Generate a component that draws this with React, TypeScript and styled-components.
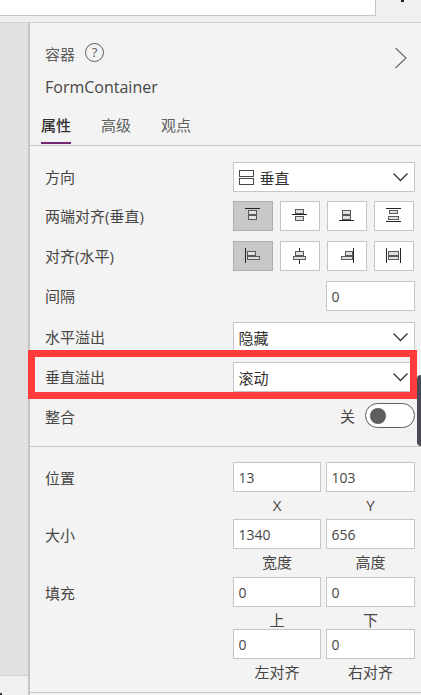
import React from 'react';
import styled, { createGlobalStyle } from 'styled-components';

const border = '#c8c6c4';
const text = '#484644';

const GlobalStyle = createGlobalStyle`
  html, body {
    margin: 0;
    height: 695px;
    overflow: hidden;
    background: #f0f0f0;
    font-family: 'Open Sans', 'Noto Sans CJK SC', sans-serif;
    color: ${text};
  }
  * {
    box-sizing: border-box;
  }
`;

const Page = styled.div`
  width: 421px;
  height: 695px;
  display: flex;
  flex-direction: column;
  overflow: hidden;
`;

const TopBar = styled.div`
  height: 23px;
  flex: none;
  display: flex;
  align-items: flex-start;
  background: #f0f0f0;
  border-bottom: 1px solid #d2d2d2;
`;

const FormulaBox = styled.div`
  width: 376px;
  height: 16px;
  background: #fff;
  border-right: 1px solid ${border};
  border-bottom: 1px solid ${border};
`;

const ExpandTip = styled.div`
  width: 3px;
  height: 2px;
  margin-left: 25px;
  background: #222;
`;

const Main = styled.div`
  flex: 1;
  display: flex;
  min-height: 0;
`;

const Rail = styled.div`
  width: 30px;
  flex: none;
  display: flex;
  flex-direction: column;
  background: #f0f0f0;
  border-right: 2px solid ${border};
`;

const RailFill = styled.div`
  height: 653px;
  background: #e1e1e1;
  border-bottom: 1px solid #d2d2d2;
`;

const RailGrow = styled.div`
  flex: 1;
  display: flex;
  align-items: flex-end;
`;

const RailTip = styled.div`
  width: 2px;
  height: 2px;
  background: #333;
`;

const Panel = styled.div`
  position: relative;
  flex: 1;
  display: flex;
  flex-direction: column;
  background: #f3f3f3;
`;

const Header = styled.div`
  display: flex;
  justify-content: space-between;
  padding: 17px 14px 0 15px;
`;

const TitleBlock = styled.div`
  display: flex;
  flex-direction: column;
`;

const TitleRow = styled.div`
  display: flex;
  align-items: center;
  height: 26px;
  gap: 10px;
  font-size: 15px;
  color: #605e5c;
`;

const HelpMark = styled.span`
  width: 19px;
  height: 19px;
  margin-top: -2px;
  border: 1px solid #605e5c;
  border-radius: 50%;
  display: flex;
  align-items: center;
  justify-content: center;
  font-size: 13px;
  line-height: 1;
`;

const ComponentName = styled.div`
  margin-top: 9px;
  font-size: 16px;
  line-height: 24px;
  color: ${text};
`;

const CollapseIcon = styled.svg`
  width: 12px;
  height: 22px;
  margin-top: 7px;
  fill: none;
  stroke: #6f6d6b;
  stroke-width: 1.2;
`;

const TabBar = styled.div`
  display: flex;
  gap: 30px;
  height: 36px;
  margin-top: 11px;
  padding-left: 11px;
  border-bottom: 1px solid ${border};
`;

const Tab = styled.div<{ $active?: boolean }>`
  height: 34px;
  padding-bottom: 2px;
  font-size: 15px;
  line-height: 30px;
  font-weight: ${(p) => (p.$active ? 500 : 400)};
  color: ${(p) => (p.$active ? '#323130' : '#605e5c')};
  border-bottom: 2px solid ${(p) => (p.$active ? '#742774' : 'transparent')};
`;

const Section = styled.div<{ $top: number; $bottom: number }>`
  padding: ${(p) => p.$top}px 0 ${(p) => p.$bottom}px;
  border-bottom: 1px solid ${border};
`;

const Row = styled.div<{ $gap?: number; $height?: number }>`
  position: relative;
  display: grid;
  grid-template-columns: 188px 182px;
  grid-template-rows: 100%;
  align-items: center;
  height: ${(p) => p.$height ?? 30}px;
  margin-top: ${(p) => p.$gap ?? 0}px;
  padding-left: 15px;
`;

const Label = styled.div`
  font-size: 15px;
  line-height: 30px;
  white-space: nowrap;
`;

const ToggleLabel = styled(Label)`
  padding-top: 3px;
`;

const Select = styled.div`
  height: 30px;
  display: flex;
  align-items: center;
  gap: 6px;
  padding: 0 6px 0 4.5px;
  background: #fff;
  border: 1px solid ${border};
  font-size: 15px;
  color: #323130;
`;

const SelectValue = styled.span`
  flex: 1;
`;

const Chevron = styled.svg`
  width: 15px;
  height: 9px;
  fill: none;
  stroke: #323130;
  stroke-width: 1.3;
`;

const DirectionIcon = styled.svg`
  width: 15px;
  height: 15px;
  fill: none;
  stroke: #484644;
  stroke-width: 1;
`;

const ButtonGroup = styled.div`
  display: grid;
  grid-template-columns: repeat(4, 39.5px);
  column-gap: 7.67px;
`;

const AlignButton = styled.div<{ $selected?: boolean }>`
  height: 30px;
  display: flex;
  align-items: center;
  justify-content: center;
  background: ${(p) => (p.$selected ? '#c8c8c8' : '#fff')};
  border: 1px solid ${(p) => (p.$selected ? '#b0aeac' : border)};
`;

const AlignSvg = styled.svg`
  width: 16px;
  height: 16px;
  rect {
    fill: #e0e0e0;
    stroke: #5a5a5a;
    stroke-width: 1;
  }
  line {
    stroke: #252423;
    stroke-width: 1;
  }
`;

const NumberInput = styled.div<{ $width?: number }>`
  height: 30px;
  width: ${(p) => (p.$width ? `${p.$width}px` : 'auto')};
  display: flex;
  align-items: center;
  padding-left: 4.5px;
  background: #fff;
  border: 1px solid ${border};
  font-size: 14px;
  color: #484644;
`;

const RightCell = styled.div`
  display: flex;
  justify-content: flex-end;
`;

const ToggleCell = styled.div`
  display: flex;
  align-items: center;
  justify-content: flex-end;
  gap: 10px;
  font-size: 15px;
`;

const ToggleTrack = styled.div`
  width: 50px;
  height: 25px;
  display: flex;
  align-items: center;
  padding-left: 4px;
  background: #fff;
  border: 1px solid #605e5c;
  border-radius: 13px;
`;

const ToggleKnob = styled.div`
  width: 16px;
  height: 16px;
  border-radius: 50%;
  background: #605e5c;
`;

const Highlight = styled.div`
  position: absolute;
  left: -2px;
  top: -12px;
  width: 389px;
  height: 49px;
  border: 7px solid #ff3b3b;
  pointer-events: none;
`;

const ScrollHandle = styled.div`
  position: absolute;
  right: 0;
  top: 352px;
  width: 4px;
  height: 71px;
  background: #4b4b57;
  border-radius: 4px 0 0 4px;
`;

const PairSection = styled.div`
  padding-top: 15px;
`;

const PairGrid = styled.div`
  display: grid;
  grid-template-columns: 188px 88px 89px;
  padding-left: 15px;
`;

const PairLabel = styled.div`
  font-size: 15px;
  line-height: 30px;
  padding-top: 1px;
  height: 30px;
`;

const PairInputs = styled.div`
  grid-column: 2 / 4;
  display: grid;
  grid-template-columns: 88px 89px;
  column-gap: 5px;
  margin-right: -5px;
`;

const Captions = styled.div<{ $height: number }>`
  grid-column: 2 / 4;
  display: grid;
  grid-template-columns: 88px 89px;
  column-gap: 5px;
  margin-right: -5px;
  height: ${(p) => p.$height}px;
`;

const Caption = styled.div<{ $height: number }>`
  height: ${(p) => p.$height}px;
  line-height: 27px;
  text-align: center;
  font-size: 15px;
  white-space: nowrap;
`;

const BlankLabel = styled.div`
  grid-column: 1;
`;

const Footer = styled.div`
  margin-top: 5px;
  border-top: 1px solid ${border};
  flex: 1;
`;

type AlignKind = 'top' | 'middle' | 'bottom' | 'spreadV' | 'left' | 'center' | 'right' | 'spreadH';

const AlignIcon = ({ kind }: { kind: AlignKind }) => {
  const drawings: Record<AlignKind, React.ReactNode> = {
    top: (
      <>
        <line x1="0" y1="0.5" x2="15" y2="0.5" />
        <rect x="3.5" y="2.5" width="8" height="4" />
        <rect x="3.5" y="7.5" width="8" height="4" />
      </>
    ),
    middle: (
      <>
        <rect x="3.5" y="1.5" width="8" height="4" />
        <line x1="0" y1="6.5" x2="15" y2="6.5" />
        <rect x="3.5" y="8.5" width="8" height="4" />
      </>
    ),
    bottom: (
      <>
        <rect x="3.5" y="2.5" width="8" height="4" />
        <rect x="3.5" y="7.5" width="8" height="4" />
        <line x1="0" y1="12.5" x2="15" y2="12.5" />
      </>
    ),
    spreadV: (
      <>
        <line x1="0" y1="0.5" x2="15" y2="0.5" />
        <rect x="3.5" y="2.5" width="8" height="3" />
        <rect x="2.5" y="8.5" width="10" height="3" />
        <line x1="0" y1="13.5" x2="15" y2="13.5" />
      </>
    ),
    left: (
      <>
        <line x1="0.5" y1="0" x2="0.5" y2="15" />
        <rect x="2.5" y="3.5" width="8" height="4" />
        <rect x="2.5" y="8.5" width="12" height="3" />
      </>
    ),
    center: (
      <>
        <line x1="7.5" y1="0" x2="7.5" y2="16" />
        <rect x="3.5" y="3.5" width="8" height="4" />
        <rect x="1.5" y="8.5" width="12" height="3" />
      </>
    ),
    right: (
      <>
        <rect x="6.5" y="3.5" width="7" height="4" />
        <rect x="2.5" y="8.5" width="11" height="3" />
        <line x1="14.5" y1="0" x2="14.5" y2="15" />
      </>
    ),
    spreadH: (
      <>
        <line x1="0.5" y1="0" x2="0.5" y2="15" />
        <rect x="2.5" y="3.5" width="10" height="4" />
        <rect x="2.5" y="8.5" width="10" height="3" />
        <line x1="14.5" y1="0" x2="14.5" y2="15" />
      </>
    ),
  };
  return <AlignSvg viewBox="0 0 16 16">{drawings[kind]}</AlignSvg>;
};

const SelectChevron = () => (
  <Chevron viewBox="0 0 15 9">
    <polyline points="0.5,0.5 7.5,7.5 14.5,0.5" />
  </Chevron>
);

const verticalButtons: AlignKind[] = ['top', 'middle', 'bottom', 'spreadV'];
const horizontalButtons: AlignKind[] = ['left', 'center', 'right', 'spreadH'];

const ButtonRow = ({ items }: { items: AlignKind[] }) => (
  <ButtonGroup>
    {items.map((kind, index) => (
      <AlignButton key={kind} $selected={index === 0}>
        <AlignIcon kind={kind} />
      </AlignButton>
    ))}
  </ButtonGroup>
);

const PairFields = ({
  label,
  values,
  captions,
  captionHeight,
}: {
  label?: string;
  values: string[];
  captions: string[];
  captionHeight: number;
}) => (
  <>
    {label ? <PairLabel>{label}</PairLabel> : <BlankLabel />}
    <PairInputs>
      {values.map((value, index) => (
        <NumberInput key={index}>{value}</NumberInput>
      ))}
    </PairInputs>
    <BlankLabel />
    <Captions $height={captionHeight}>
      {captions.map((caption) => (
        <Caption key={caption} $height={captionHeight}>
          {caption}
        </Caption>
      ))}
    </Captions>
  </>
);

export default function App() {
  return (
    <Page>
      <GlobalStyle />
      <TopBar>
        <FormulaBox />
        <ExpandTip />
      </TopBar>
      <Main>
        <Rail>
          <RailFill />
          <RailGrow>
            <RailTip />
          </RailGrow>
        </Rail>
        <Panel>
          <Header>
            <TitleBlock>
              <TitleRow>
                容器
                <HelpMark>?</HelpMark>
              </TitleRow>
              <ComponentName>FormContainer</ComponentName>
            </TitleBlock>
            <CollapseIcon viewBox="0 0 12 22">
              <polyline points="0.5,1 11,11 0.5,21" />
            </CollapseIcon>
          </Header>
          <TabBar>
            <Tab $active>属性</Tab>
            <Tab>高级</Tab>
            <Tab>观点</Tab>
          </TabBar>

          <Section $top={16} $bottom={18}>
            <Row>
              <Label>方向</Label>
              <Select>
                <DirectionIcon viewBox="0 0 15 15">
                  <rect x="0.5" y="0.5" width="14" height="6" />
                  <rect x="0.5" y="8.5" width="14" height="6" />
                </DirectionIcon>
                <SelectValue>垂直</SelectValue>
                <SelectChevron />
              </Select>
            </Row>
            <Row $gap={9}>
              <Label>两端对齐(垂直)</Label>
              <ButtonRow items={verticalButtons} />
            </Row>
            <Row $gap={10}>
              <Label>对齐(水平)</Label>
              <ButtonRow items={horizontalButtons} />
            </Row>
            <Row $gap={10}>
              <Label>间隔</Label>
              <RightCell>
                <NumberInput $width={89}>0</NumberInput>
              </RightCell>
            </Row>
            <Row $gap={11}>
              <Label>水平溢出</Label>
              <Select>
                <SelectValue>隐藏</SelectValue>
                <SelectChevron />
              </Select>
            </Row>
            <Row $gap={10}>
              <Label>垂直溢出</Label>
              <Select>
                <SelectValue>滚动</SelectValue>
                <SelectChevron />
              </Select>
              <Highlight />
            </Row>
            <Row $gap={11} $height={25}>
              <ToggleLabel>整合</ToggleLabel>
              <ToggleCell>
                关
                <ToggleTrack>
                  <ToggleKnob />
                </ToggleTrack>
              </ToggleCell>
            </Row>
          </Section>

          <PairSection>
            <PairGrid>
              <PairFields label="位置" values={['13', '103']} captions={['X', 'Y']} captionHeight={27} />
              <PairFields label="大小" values={['1340', '656']} captions={['宽度', '高度']} captionHeight={28} />
              <PairFields label="填充" values={['0', '0']} captions={['上', '下']} captionHeight={22} />
              <PairFields values={['0', '0']} captions={['左对齐', '右对齐']} captionHeight={28} />
            </PairGrid>
          </PairSection>
          <Footer />
          <ScrollHandle />
        </Panel>
      </Main>
    </Page>
  );
}
